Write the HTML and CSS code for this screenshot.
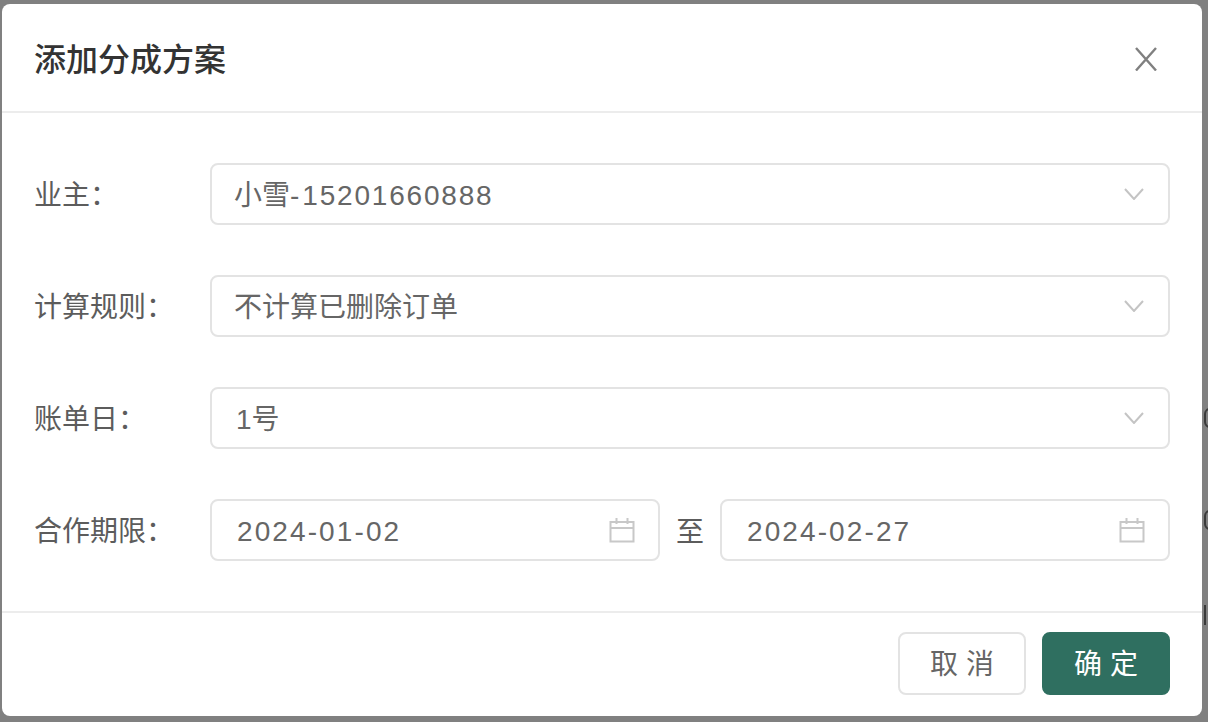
FILE: index.html
```html
<!DOCTYPE html>
<html lang="zh-CN">
    <head>
        <meta charset="UTF-8">
        <title>添加分成方案</title>
        <link rel="stylesheet" href="styles.css">
    </head>
    <body>
        <div class="peek peek-one"></div>
        <div class="peek peek-two"></div>
        <div class="peek peek-three"></div>
        <div class="modal">
            <header class="modal-header">
                <span class="modal-title">添加分成方案</span>
                <svg class="close-icon" viewBox="0 0 24 24" width="24" height="24">
                    <path d="M2 1L22 23.5M22 1L2 23.5"/>
                </svg>
            </header>
            <form class="modal-body">
                <div class="form-row">
                    <label class="form-label">业主：</label>
                    <div class="field">
                        <span class="field-text">小雪-<span class="digits">15201660888</span></span>
                        <svg class="arrow-icon" viewBox="0 0 20 12" width="20" height="12"><path d="M1 1L10 11L19 1"/></svg>
                    </div>
                </div>
                <div class="form-row">
                    <label class="form-label">计算规则：</label>
                    <div class="field">
                        <span class="field-text">不计算已删除订单</span>
                        <svg class="arrow-icon" viewBox="0 0 20 12" width="20" height="12"><path d="M1 1L10 11L19 1"/></svg>
                    </div>
                </div>
                <div class="form-row">
                    <label class="form-label">账单日：</label>
                    <div class="field">
                        <span class="field-text day-text">1号</span>
                        <svg class="arrow-icon" viewBox="0 0 20 12" width="20" height="12"><path d="M1 1L10 11L19 1"/></svg>
                    </div>
                </div>
                <div class="form-row">
                    <label class="form-label">合作期限：</label>
                    <div class="field date-field">
                        <span class="field-text date-text">2024-01-02</span>
                        <svg class="date-icon" viewBox="0 0 26 26" width="26" height="26"><path d="M1.5 5H24.5V24.5H1.5ZM1.5 11H24.5M7.5 1V7M18.5 1V7"/></svg>
                    </div>
                    <span class="range-sep">至</span>
                    <div class="field date-field">
                        <span class="field-text date-text">2024-02-27</span>
                        <svg class="date-icon" viewBox="0 0 26 26" width="26" height="26"><path d="M1.5 5H24.5V24.5H1.5ZM1.5 11H24.5M7.5 1V7M18.5 1V7"/></svg>
                    </div>
                </div>
            </form>
            <footer class="modal-footer">
                <button class="btn" type="button">取 消</button>
                <button class="btn btn-primary" type="button">确 定</button>
            </footer>
        </div>
    </body>
</html>
```

FILE: styles.css
```css
*{
    margin: 0;
    padding: 0;
    box-sizing: border-box;
    font-family: "Liberation Sans", "Noto Sans CJK SC", sans-serif;
}
body{
    position: relative;
    width: 1208px;
    height: 722px;
    padding: 4px 6px 6px 2px;
    overflow: hidden;
    background-color: #808080;
}
/* slivers of the table behind the dialog */
.peek{
    position: absolute;
    left: 1204px;
    width: 12px;
    height: 20px;
    border: 2px solid #3a3a3a;
    border-radius: 6px;
}
.peek-one{
    top: 408px;
}
.peek-two{
    top: 510px;
}
.peek-three{
    top: 605px;
    border-width: 0 0 0 2px;
    border-radius: 0;
}
.modal{
    display: flex;
    flex-direction: column;
    height: 712px;
    border-radius: 8px;
    background-color: #fff;
}
.modal-header{
    display: flex;
    align-items: center;
    justify-content: space-between;
    height: 109px;
    padding: 0 44px 0 32px;
    border-bottom: 2px solid #ececec;
}
.modal-title{
    margin-top: -2px;
    font-size: 32px;
    font-weight: 500;
    color: #333;
}
.close-icon{
    margin-top: 2px;
}
.close-icon path{
    fill: none;
    stroke: #808080;
    stroke-width: 2.4;
}
.modal-body{
    display: flex;
    flex-direction: column;
    gap: 50px;
    flex: 1;
    padding: 50px 32px 0;
}
.form-row{
    display: flex;
    align-items: center;
}
.form-label{
    width: 176px;
    margin-top: -3px;
    font-size: 28px;
    color: #5c5c5c;
}
.field{
    display: flex;
    align-items: center;
    justify-content: space-between;
    flex: 1;
    height: 62px;
    padding: 0 24px 0 22px;
    border: 2px solid #e3e3e3;
    border-radius: 8px;
}
.field-text{
    margin-top: -3px;
    font-size: 28px;
    color: #666;
}
.digits{
    margin-left: 3px;
    letter-spacing: 1.8px;
}
.day-text{
    margin-left: 2px;
}
.arrow-icon path{
    fill: none;
    stroke: #c4c4c4;
    stroke-width: 2;
}
.date-field{
    padding-left: 25px;
}
.date-text{
    margin-top: 3px;
    letter-spacing: 2.1px;
}
.date-icon{
    margin-right: -1px;
}
.date-icon path{
    fill: none;
    stroke: #c8c8c8;
    stroke-width: 2;
}
.range-sep{
    width: 60px;
    font-size: 28px;
    text-align: center;
    color: #5c5c5c;
}
.modal-footer{
    display: flex;
    justify-content: flex-end;
    gap: 16px;
    height: 105px;
    padding: 19px 32px 0;
    border-top: 2px solid #ececec;
}
.btn{
    width: 128px;
    height: 63px;
    padding-bottom: 4px;
    font-size: 28px;
    color: #666;
    background-color: #fff;
    border: 2px solid #e3e3e3;
    border-radius: 8px;
}
.btn-primary{
    color: #fff;
    background-color: #2f6f60;
    border-color: #2f6f60;
}
```
